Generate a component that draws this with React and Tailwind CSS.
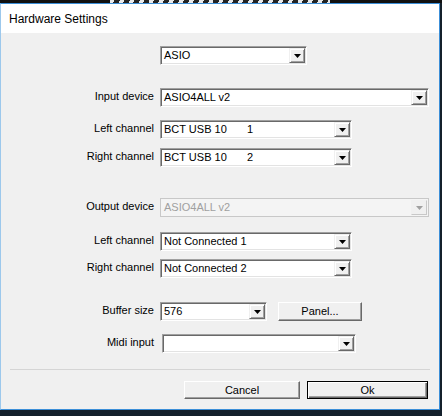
import clsx from 'clsx'

const font = { fontFamily: '"Liberation Sans", Arial, sans-serif' }

function Arrow({ disabled }) {
  return (
    <svg width="7" height="4" viewBox="0 0 7 4" className="block">
      <path d="M0 0h7L3.5 4z" fill={disabled ? '#a0a0a0' : '#000'} />
    </svg>
  )
}

function DropButton({ disabled }) {
  return (
    <div
      className={clsx(
        'flex h-full w-[16px] items-center justify-center border border-t-[#f0f0f0] border-l-[#f0f0f0] bg-[#f0f0f0]',
        disabled
          ? 'border-r-[#c8c8c8] border-b-[#c8c8c8]'
          : 'border-r-[#696969] border-b-[#696969] shadow-[inset_1px_1px_#fff,inset_-1px_-1px_#a0a0a0]',
      )}
    >
      <Arrow disabled={disabled} />
    </div>
  )
}

function Combo({ className, disabled, children }) {
  return (
    <div
      className={clsx(
        'flex h-[19px] border p-[1px]',
        disabled
          ? 'border-[#c8c8c8] bg-[#f4f4f4] text-[#a0a0a0]'
          : 'border-t-[#a0a0a0] border-l-[#a0a0a0] border-r-white border-b-white bg-white text-black shadow-[inset_1px_1px_#696969,inset_-1px_-1px_#e3e3e3]',
        className,
      )}
    >
      <div className="flex flex-1 items-center pl-[2px] text-[11px] leading-none">{children}</div>
      <DropButton disabled={disabled} />
    </div>
  )
}

function Channel({ name, num }) {
  return (
    <>
      <span className="w-[83px]">{name}</span>
      <span>{num}</span>
    </>
  )
}

function Row({ label, className, children }) {
  return (
    <div className={clsx('flex items-center', className)}>
      <span className="w-[159px] pr-[6px] pb-[2px] text-right text-[11px] leading-none">{label}</span>
      {children}
    </div>
  )
}

function PushButton({ className, primary, children }) {
  return (
    <button
      className={clsx(
        'flex items-center justify-center bg-[#f0f0f0] text-[11px] leading-none text-black',
        primary
          ? 'border border-black shadow-[inset_1px_1px_#fff,inset_-1px_-1px_#696969,inset_-2px_-2px_#a0a0a0]'
          : 'border border-t-white border-l-white border-r-[#696969] border-b-[#696969] shadow-[inset_-1px_-1px_#a0a0a0]',
        className,
      )}
    >
      {children}
    </button>
  )
}

export default function App() {
  return (
    <div className="flex h-[416px] w-[442px] flex-col overflow-hidden bg-[#14202b]" style={font}>
      <div className="h-[3px] bg-[#111]">
        <div className="ml-[110px] h-full w-[220px] bg-[repeating-linear-gradient(115deg,#e8e8e8_0_4px,#222_4px_9px)]" />
      </div>
      <div className="flex h-[407px] w-[440px] flex-col border border-[#3c8fd8] border-l-[#9cc8ec] bg-[#f0f0f0]">
        <div className="flex h-[29px] items-center bg-white pl-[8px] text-[12px] text-black">Hardware Settings</div>

        <div className="flex flex-col pt-[13px] text-black">
          <Row label="">
            <Combo className="w-[147px]">ASIO</Combo>
          </Row>

          <Row label="Input device" className="mt-[23px]">
            <Combo className="w-[269px]">ASIO4ALL v2</Combo>
          </Row>
          <Row label="Left channel" className="mt-[13px]">
            <Combo className="w-[192px]">
              <Channel name="BCT USB 10" num="1" />
            </Combo>
          </Row>
          <Row label="Right channel" className="mt-[9px]">
            <Combo className="w-[192px]">
              <Channel name="BCT USB 10" num="2" />
            </Combo>
          </Row>

          <Row label="Output device" className="mt-[31px]">
            <Combo className="w-[269px]" disabled>
              ASIO4ALL v2
            </Combo>
          </Row>
          <Row label="Left channel" className="mt-[15px]">
            <Combo className="w-[192px]">Not Connected 1</Combo>
          </Row>
          <Row label="Right channel" className="mt-[8px]">
            <Combo className="w-[192px]">Not Connected 2</Combo>
          </Row>

          <Row label="Buffer size" className="mt-[24px]">
            <Combo className="w-[107px]">576</Combo>
            <PushButton className="ml-[11px] h-[19px] w-[84px]">Panel...</PushButton>
          </Row>
          <Row label="Midi input" className="mt-[13px]">
            <Combo className="ml-[2px] w-[194px]" />
          </Row>
        </div>

        <div className="mx-[9px] mt-[16px] border-t border-[#d5d5d5]" />

        <div className="mt-[11px] flex justify-end gap-[7px] pr-[11px]">
          <PushButton className="h-[18px] w-[116px]">Cancel</PushButton>
          <PushButton className="h-[18px] w-[121px]" primary>
            Ok
          </PushButton>
        </div>
      </div>
    </div>
  )
}
